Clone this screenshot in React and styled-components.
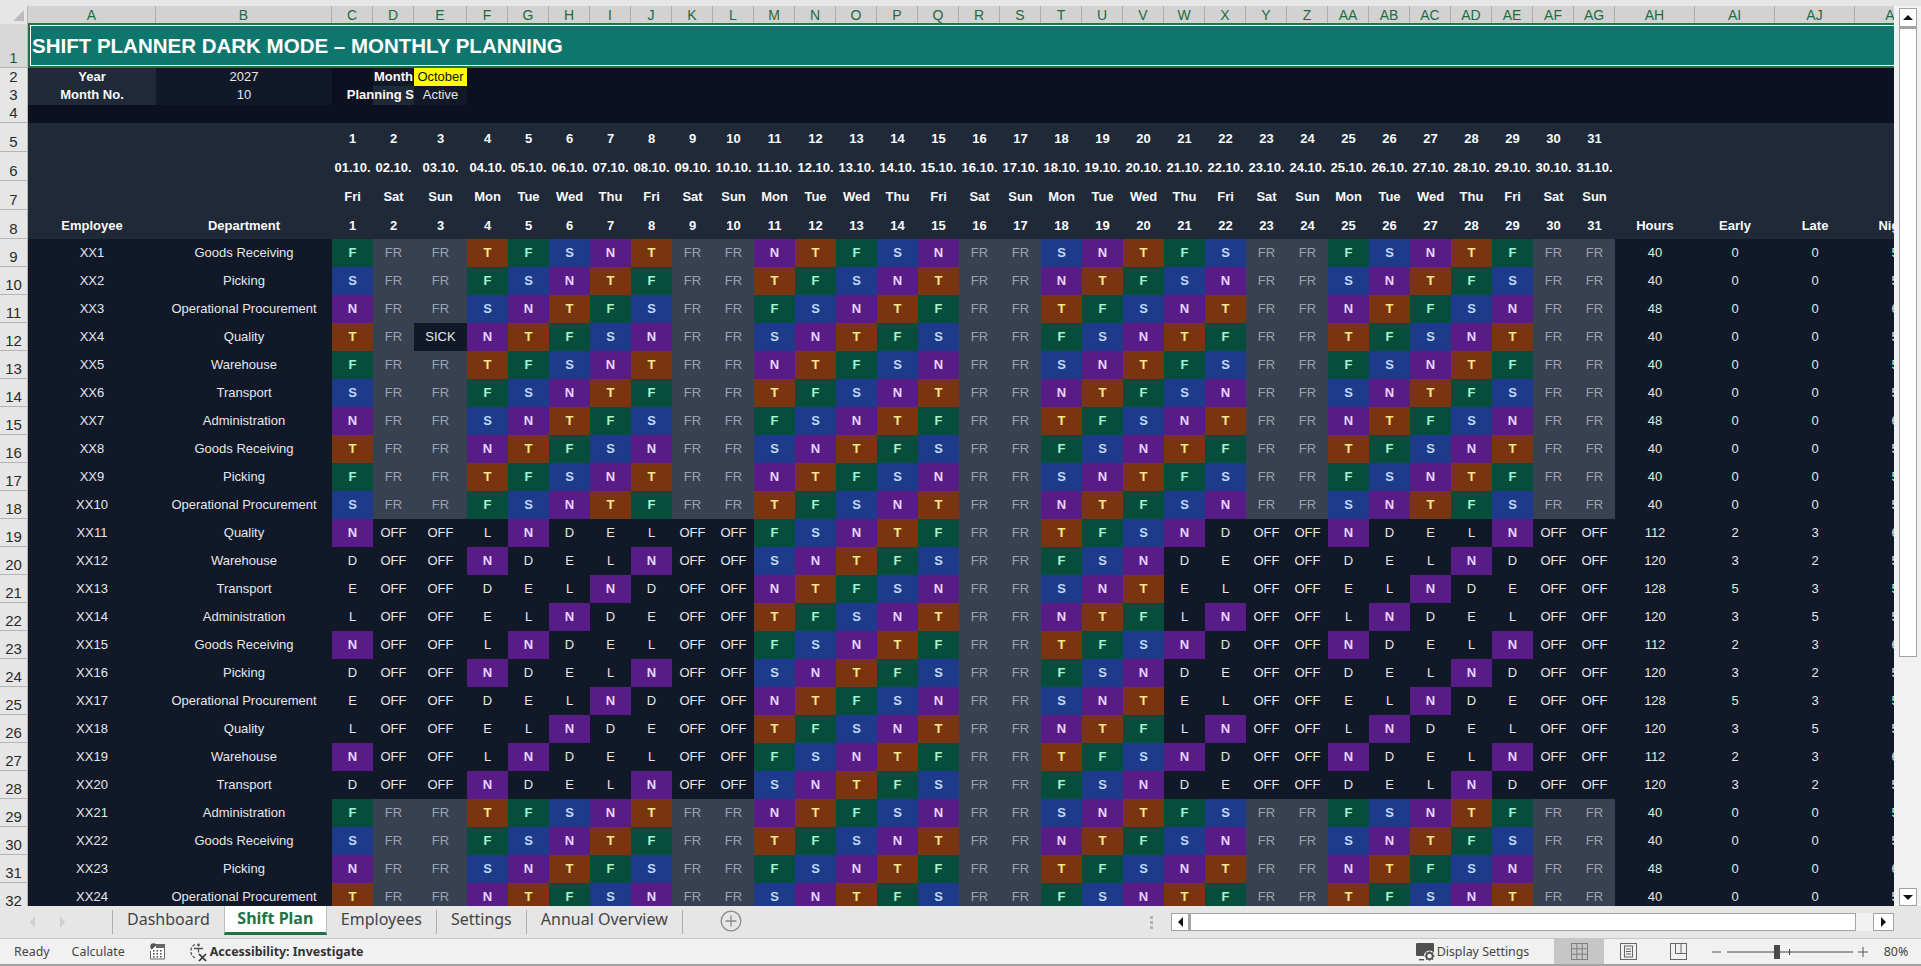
import React from "react";
import styled, { createGlobalStyle } from "styled-components";

const Global = createGlobalStyle`
  html, body { margin: 0; padding: 0; height: 100%; overflow: hidden; background: #e6e6e6; }
  #root { height: 100%; }
  * { box-sizing: border-box; }
`;

const COLS = `28px 128px 176px 41px 41px 53px repeat(28, 41px) repeat(4, 80px)`;

const Frame = styled.div`
  height: 966px;
  width: 1921px;
  display: flex;
  flex-direction: column;
  font-family: "Liberation Sans", Arial, sans-serif;
`;
const TopStrip = styled.div`height: 6px; background: #e6e6e6; flex: none;`;
const Middle = styled.div`height: 900px; flex: none; display: flex; background: #f1f1f1;`;
const Sheet = styled.div`width: 1894px; flex: none; overflow: hidden;`;
const Row = styled.div`
  display: grid;
  grid-template-columns: ${COLS};
  width: 1935px;
  height: ${p => p.$h}px;
  background: ${p => p.$bg || "#111827"};
  font-size: 13px;
`;
const RaisedRow = styled(Row)`
  > * + * { padding-bottom: 2px; }
`;
const BandRow = styled(Row)`
  background: #1f2937;
  > * + * { padding-top: 2px; }
`;
const Corner = styled.div`
  background: #e6e6e6;
  border-right: 1px solid #b5b5b5;
  display: flex;
  align-items: flex-end;
  justify-content: flex-end;
  padding: 0 3px 3px 0;
`;
const Triangle = styled.div`
  width: 11px;
  height: 11px;
  background: #bcbcbc;
  clip-path: polygon(100% 0, 100% 100%, 0 100%);
`;
const ColHead = styled.div`
  background: #d2d2d2;
  border-right: 1px solid #adadad;
  color: #1d6b40;
  font-size: 14px;
  display: flex;
  align-items: center;
  justify-content: center;
  white-space: nowrap;
  border-bottom: 1px solid #217346;
`;
const RowHead = styled.div`
  background: ${p => (p.$active ? "#d8d8d8" : "#e6e6e6")};
  color: ${p => (p.$active ? "#1d5c3a" : "#2b2b2b")};
  border-right: 1px solid #b5b5b5;
  border-bottom: 1px solid #b5b5b5;
  font-size: 15px;
  line-height: 17px;
  display: flex;
  align-items: flex-end;
  justify-content: center;
  padding-bottom: 1px;
`;
const Title = styled.div`
  grid-column: 2 / -1;
  background: #0f766e;
  border: 2px solid #217346;
  box-shadow: inset 0 0 0 1px #fff;
  margin-top: -1px;
  color: #fff;
  font-weight: 700;
  font-size: 20.5px;
  display: flex;
  align-items: center;
  padding-left: 2px;
  white-space: nowrap;
`;
const Cell = styled.div`
  display: flex;
  align-items: center;
  justify-content: ${p => p.$align || "center"};
  white-space: nowrap;
  min-width: 0;
  background: ${p => p.$bg || "transparent"};
  color: ${p => p.$fg || "#e5e7eb"};
  font-weight: ${p => (p.$bold ? 700 : 400)};
`;
const SHIFT = {
  F: ["#064e3b", "#a7f3d0", 700],
  S: ["#1e3a8a", "#bfdbfe", 700],
  N: ["#581c87", "#e9d5ff", 700],
  T: ["#78350f", "#fde68a", 700],
  FR: ["#374151", "#9ca3af", 400],
};
const ShiftCell = styled.div`
  display: flex;
  align-items: center;
  justify-content: center;
  background: ${p => (SHIFT[p.$k] ? SHIFT[p.$k][0] : "transparent")};
  color: ${p => (SHIFT[p.$k] ? SHIFT[p.$k][1] : "#e5e7eb")};
  font-weight: ${p => (SHIFT[p.$k] ? SHIFT[p.$k][2] : 400)};
`;

const VScroll = styled.div`
  flex: 1;
  padding: 2px 4px 0 5px;
  display: flex;
  flex-direction: column;
`;
const ScrollBtn = styled.div`
  height: ${p => p.$h || 19}px;
  width: ${p => p.$w || "auto"};
  background: #fff;
  border: 1px solid #a3a3a3;
  display: flex;
  align-items: center;
  justify-content: center;
  flex: none;
`;
const VThumb = styled.div`height: 630px; background: #fff; border: 1px solid #a3a3a3; border-top-width: 2px; flex: none;`;
const VGap = styled.div`flex: 1;`;
const Arrow = styled.div`
  width: 0;
  height: 0;
  border-style: solid;
  ${p => ({
    up: "border-width: 0 5px 5px 5px; border-color: transparent transparent #111 transparent;",
    down: "border-width: 5px 5px 0 5px; border-color: #111 transparent transparent transparent;",
    left: "border-width: 5px 5px 5px 0; border-color: transparent #111 transparent transparent;",
    right: "border-width: 5px 0 5px 5px; border-color: transparent transparent transparent #111;",
  }[p.$d])}
`;

const TabBar = styled.div`
  height: 33px;
  flex: none;
  background: #e6e6e6;
  display: flex;
  align-items: stretch;
  padding-right: 27px;
  border-bottom: 1px solid #c6c6c6;
`;
const Nav = styled.div`
  width: 113px;
  flex: none;
  display: flex;
  align-items: center;
  justify-content: flex-start;
  gap: 25px;
  padding-left: 30px;
  margin-top: 4px;
  margin-bottom: 4px;
  border-right: 1px solid #aeaeae;
`;
const NavArrow = styled.div`
  width: 0;
  height: 0;
  border-style: solid;
  border-width: 6px ${p => (p.$left ? "5px 6px 0" : "0 6px 5px")};
  border-color: transparent ${p => (p.$left ? "#cfcfcf" : "transparent")} transparent ${p => (p.$left ? "transparent" : "#cfcfcf")};
`;
const Tab = styled.div`
  font-family: "Noto Sans", "Open Sans", sans-serif;
  font-size: 16px;
  color: #444;
  padding: 0 ${p => p.$pad || 14}px 6px;
  margin: 4px 0;
  display: flex;
  align-items: center;
  white-space: nowrap;
  border-right: ${p => (p.$sep ? "1px solid #aeaeae" : "none")};
`;
const ActiveTab = styled.div`
  font-family: "Noto Sans", "Open Sans", sans-serif;
  font-size: 16px;
  font-weight: 700;
  color: #217346;
  background: #fff;
  width: 103px;
  height: 29px;
  padding-bottom: 3px;
  border: 1px solid #bdbdbd;
  border-top: none;
  border-bottom: 3px solid #217346;
  display: flex;
  align-items: center;
  justify-content: center;
  white-space: nowrap;
`;
const AddWrap = styled.div`
  margin-left: 37px;
  display: flex;
  align-items: center;
  padding-bottom: 2px;
`;
const RightGroup = styled.div`
  margin-left: auto;
  display: flex;
  align-items: center;
  gap: 18px;
`;
const Grip = styled.div`
  width: 3px;
  height: 13px;
  background: repeating-linear-gradient(#b3b3b3 0 3px, transparent 3px 5px);
`;
const HScroll = styled.div`display: flex; width: 723px; height: 18px; margin-bottom: 1px;`;
const HThumb = styled.div`flex: 1; background: #fff; border: 1px solid #a3a3a3; border-left-width: 2px;`;
const HSpace = styled.div`width: 17px; background: #f1f1f1; flex: none;`;

const StatusBar = styled.div`
  flex: 1;
  background: #f1f1f1;
  display: flex;
  align-items: center;
  border-bottom: 2px solid #a2a2a2;
  font-family: "Noto Sans", "Open Sans", sans-serif;
  font-size: 12.4px;
  color: #444;
  padding-left: 14px;
`;
const Status = styled.span`
  white-space: nowrap;
  margin-left: ${p => p.$ml || 0}px;
  font-weight: ${p => (p.$bold ? 700 : 400)};
  color: ${p => (p.$bold ? "#333" : "#444")};
`;
const IconSlot = styled.div`
  display: flex;
  align-items: center;
  flex: none;
  margin-left: ${p => p.$ml || 0}px;
`;
const StatusRight = styled.div`
  margin-left: auto;
  display: flex;
  align-items: stretch;
  height: 100%;
`;
const StatusItem = styled.div`
  display: flex;
  align-items: center;
  justify-content: center;
  width: ${p => p.$w}px;
  margin-left: ${p => p.$ml || 0}px;
  background: ${p => p.$bg || "transparent"};
  flex: none;
  white-space: nowrap;
`;

const letters = (() => {
  const a = "ABCDEFGHIJKLMNOPQRSTUVWXYZ".split("");
  return [...a, ...["A", "B", "C", "D", "E", "F", "G", "H", "I", "J", "K"].map(c => "A" + c)];
})();
const DOW = ["Fri", "Sat", "Sun", "Mon", "Tue", "Wed", "Thu"];
const days = Array.from({ length: 31 }, (_, i) => i + 1);
const isWeekend = d => [2, 3, 9, 10, 16, 17, 23, 24, 30, 31].includes(d);
const DEPTS = ["Goods Receiving", "Picking", "Operational Procurement", "Quality", "Warehouse", "Transport", "Administration"];
const C1 = ["F", "S", "N", "T"];
const C2 = ["N", "D", "E", "L"];

function shift(idx, d) {
  const first = C1[(d - 1 + idx) % 4];
  const offGroup = idx >= 10 && idx < 20;
  if (idx === 3 && d === 3) return "SICK";
  if (offGroup) {
    if (isWeekend(d)) return d >= 11 && d <= 17 ? "FR" : "OFF";
    if (d >= 11 && d <= 20) return first;
    return C2[(d - 1 + (idx - 10)) % 4];
  }
  return isWeekend(d) ? "FR" : first;
}
const HOURS1 = [40, 40, 48, 40];
const stats = idx => {
  if (idx >= 10 && idx < 20) {
    const k = (idx - 10) % 4;
    return { h: [112, 120, 128, 120][k], e: [2, 3, 5, 3][k], l: [3, 2, 3, 5][k], n: [6, 5, 5, 5][k] };
  }
  const h = idx < 20 ? [40, 40, 48, 40, 40, 40, 48, 40, 40, 40][idx] : HOURS1[idx - 20];
  return { h, e: 0, l: 0, n: h === 48 ? 6 : 5 };
};

const MacroIcon = () => (
  <svg width="15" height="17" viewBox="0 0 15 17">
    <circle cx="3.5" cy="3.5" r="3.2" fill="#555" />
    <path d="M7 1.5h7.5V16H.5V8" fill="#fff" stroke="#666" />
    <rect x="6" y="1" width="9" height="4" fill="#666" />
    {[7, 10, 13].map(y => [3, 6.5, 10].map(x => <rect key={`${x}-${y}`} x={x} y={y} width="1.6" height="1.6" fill="#555" />))}
  </svg>
);
const AccessIcon = () => (
  <svg width="20" height="20" viewBox="0 0 20 20" fill="none" stroke="#555" strokeWidth="1.3">
    <path d="M6 2.500A7 7 0 0 0 2 10a7 7 0 0 0 4 6" strokeDasharray="3 1.5" />
    <circle cx="9.500" cy="3" r="1.4" fill="#555" stroke="none" />
    <path d="M5 6.500h9M9.500 6.500v4" />
    <path d="M10 12l7 7M17 12l-7 7" stroke="#333" strokeWidth="1.7" />
  </svg>
);
const DisplayIcon = () => (
  <svg width="20" height="20" viewBox="0 0 20 20">
    <rect x="0" y="1" width="18" height="13" rx="1" fill="#505050" />
    <path d="M3 17h5v1.400H3z" fill="#505050" />
    <circle cx="13.500" cy="14" r="5.600" fill="#f1f1f1" />
    <circle cx="13.500" cy="14" r="3.200" fill="none" stroke="#505050" strokeWidth="1.8" />
    <path d="M13.500 9.200v2M13.500 16.800v2M8.700 14h2M16.300 14h2M10.100 10.600l1.400 1.400M15.500 16l1.400 1.400M16.900 10.600L15.500 12M11.500 16l-1.400 1.400" stroke="#505050" strokeWidth="1.4" />
  </svg>
);
const GridViewIcon = () => (
  <svg width="17" height="17" viewBox="0 0 17 17" fill="none" stroke="#7f7f7f">
    <rect x=".5" y=".5" width="16" height="16" />
    <path d="M5.800 .5v16M11.200 .5v16M.5 5.800h16M.5 11.200h16" />
  </svg>
);
const PageViewIcon = () => (
  <svg width="17" height="17" viewBox="0 0 17 17" fill="none" stroke="#666">
    <rect x=".5" y=".5" width="16" height="16" />
    <rect x="4.500" y="3" width="8" height="11" />
    <path d="M6 6h5M6 8.500h5M6 11h5" />
  </svg>
);
const BreakViewIcon = () => (
  <svg width="17" height="17" viewBox="0 0 17 17" fill="none" stroke="#666">
    <rect x=".5" y=".5" width="16" height="16" />
    <path d="M5.500 .5V10.500H16.500M11 .5V10.500" />
  </svg>
);
const Slider = () => (
  <svg width="156" height="16" viewBox="0 0 156 16">
    <path d="M0 8h9M146 8h10M151 3v10" stroke="#555" strokeWidth="1" fill="none" />
    <path d="M15 8h126" stroke="#444" strokeWidth="1" />
    <path d="M77.500 5v6" stroke="#444" />
    <rect x="62" y="1" width="6" height="14" fill="#4a4a4a" />
  </svg>
);

export default function App() {
  return (
    <Frame>
      <Global />
      <TopStrip />
      <Middle>
        <Sheet>
          <Row $h={18} $bg="#d2d2d2">
            <Corner><Triangle /></Corner>
            {letters.map(l => <ColHead key={l}>{l}</ColHead>)}
          </Row>
          <Row $h={44} $bg="#0b1120">
            <RowHead $active>1</RowHead>
            <Title>SHIFT PLANNER DARK MODE – MONTHLY PLANNING</Title>
          </Row>
          <RaisedRow $h={18} $bg="#0b1120">
            <RowHead>2</RowHead>
            <Cell $bg="#1f2937" $bold $fg="#f9fafb">Year</Cell>
            <Cell $bg="#111827">2027</Cell>
            <Cell />
            <Cell $bg="#111827" $bold $fg="#f9fafb">Month</Cell>
            <Cell $bg="#ffff00" $fg="#111">October</Cell>
          </RaisedRow>
          <RaisedRow $h={18} $bg="#0b1120">
            <RowHead>3</RowHead>
            <Cell $bg="#1f2937" $bold $fg="#f9fafb">Month No.</Cell>
            <Cell $bg="#111827">10</Cell>
            <Cell />
            <Cell $bg="#1f2937" $bold $fg="#f9fafb" $align="flex-end">Planning S</Cell>
            <Cell $bg="#111827">Active</Cell>
          </RaisedRow>
          <Row $h={19} $bg="#0b1120"><RowHead>4</RowHead></Row>
          <BandRow $h={29}>
            <RowHead>5</RowHead>
            <Cell /><Cell />
            {days.map(d => <Cell key={d} $bold $fg="#f9fafb">{d}</Cell>)}
          </BandRow>
          <BandRow $h={29}>
            <RowHead>6</RowHead>
            <Cell /><Cell />
            {days.map(d => <Cell key={d} $bold $fg="#f9fafb">{String(d).padStart(2, "0")}.10.</Cell>)}
          </BandRow>
          <BandRow $h={29}>
            <RowHead>7</RowHead>
            <Cell /><Cell />
            {days.map(d => <Cell key={d} $bold $fg="#f9fafb">{DOW[(d - 1) % 7]}</Cell>)}
          </BandRow>
          <BandRow $h={29}>
            <RowHead>8</RowHead>
            <Cell $bold $fg="#f9fafb">Employee</Cell>
            <Cell $bold $fg="#f9fafb">Department</Cell>
            {days.map(d => <Cell key={d} $bold $fg="#f9fafb">{d}</Cell>)}
            {["Hours", "Early", "Late", "Night"].map(t => <Cell key={t} $bold $fg="#f9fafb">{t}</Cell>)}
          </BandRow>
          {Array.from({ length: 24 }, (_, idx) => {
            const s = stats(idx);
            return (
              <RaisedRow $h={28} key={idx}>
                <RowHead>{idx + 9}</RowHead>
                <Cell>XX{idx + 1}</Cell>
                <Cell>{DEPTS[idx % 7]}</Cell>
                {days.map(d => {
                  const v = shift(idx, d);
                  return <ShiftCell key={d} $k={v}>{v}</ShiftCell>;
                })}
                <Cell>{s.h}</Cell>
                <Cell>{s.e}</Cell>
                <Cell>{s.l}</Cell>
                <Cell>{s.n}</Cell>
              </RaisedRow>
            );
          })}
        </Sheet>
        <VScroll>
          <ScrollBtn><Arrow $d="up" /></ScrollBtn>
          <VThumb />
          <VGap />
          <ScrollBtn $h={18}><Arrow $d="down" /></ScrollBtn>
        </VScroll>
      </Middle>
      <TabBar>
        <Nav><NavArrow $left /><NavArrow /></Nav>
        <Tab>Dashboard</Tab>
        <ActiveTab>Shift Plan</ActiveTab>
        <Tab $sep $pad={14}>Employees</Tab>
        <Tab $sep $pad={14}>Settings</Tab>
        <Tab $sep $pad={14}>Annual Overview</Tab>
        <AddWrap>
          <svg width="22" height="22" viewBox="0 0 22 22" fill="none" stroke="#8a8a8a" strokeWidth="1.3">
            <circle cx="11" cy="11" r="9.800" />
            <path d="M11 5.500v11M5.500 11h11" />
          </svg>
        </AddWrap>
        <RightGroup>
          <Grip />
          <HScroll>
            <ScrollBtn $h={18} $w="18px"><Arrow $d="left" /></ScrollBtn>
            <HThumb />
            <HSpace />
            <ScrollBtn $h={18} $w="21px"><Arrow $d="right" /></ScrollBtn>
          </HScroll>
        </RightGroup>
      </TabBar>
      <StatusBar>
        <Status>Ready</Status>
        <Status $ml={22}>Calculate</Status>
        <IconSlot $ml={25}><MacroIcon /></IconSlot>
        <IconSlot $ml={24}><AccessIcon /></IconSlot>
        <Status $ml={1} $bold>Accessibility: Investigate</Status>
        <StatusRight>
          <StatusItem $w={20}><DisplayIcon /></StatusItem>
          <StatusItem $w={93} $ml={1}>Display Settings</StatusItem>
          <StatusItem $w={50} $ml={24.5} $bg="#c6c6c6"><GridViewIcon /></StatusItem>
          <StatusItem $w={17} $ml={16}><PageViewIcon /></StatusItem>
          <StatusItem $w={17} $ml={33}><BreakViewIcon /></StatusItem>
          <StatusItem $w={156} $ml={25}><Slider /></StatusItem>
          <StatusItem $w={50} $ml={3}>80%</StatusItem>
        </StatusRight>
      </StatusBar>
    </Frame>
  );
}
